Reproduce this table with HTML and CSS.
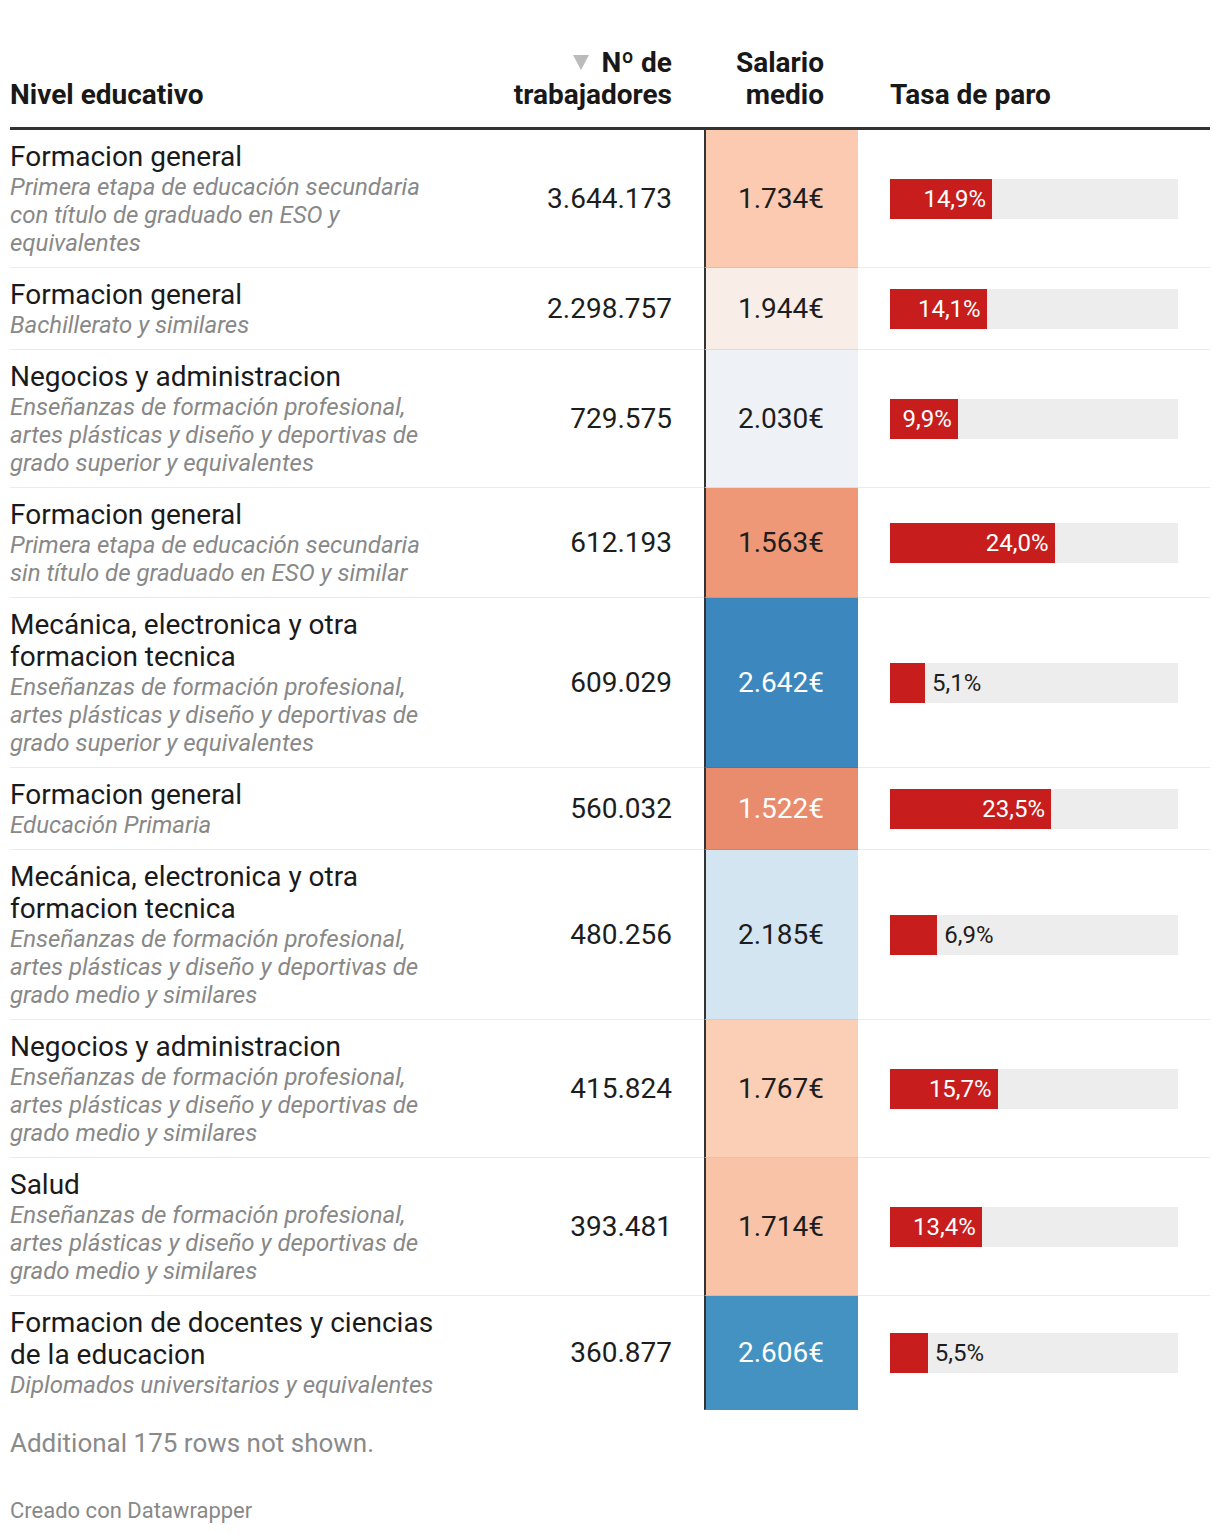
FILE: index.html
```html
<!DOCTYPE html>
<html lang="es">
<head>
<meta charset="utf-8">
<title>Nivel educativo</title>
<link rel="stylesheet" href="styles.css">
</head>
<body>
<div class="chart">
  <div class="row head">
    <div class="c name">Nivel educativo</div>
    <div class="c num"><span class="sort"></span> Nº de<br>trabajadores</div>
    <div class="c sal">Salario<br>medio</div>
    <div class="c tasa">Tasa de paro</div>
  </div>

  <div class="row">
    <div class="c name"><div class="t">Formacion general</div><div class="s">Primera etapa de educación secundaria con título de graduado en ESO y equivalentes</div></div>
    <div class="c num">3.644.173</div>
    <div class="c sal h1734">1.734€</div>
    <div class="c tasa"><div class="track"><div class="bar" style="--v:14.9"><span>14,9%</span></div></div></div>
  </div>

  <div class="row">
    <div class="c name"><div class="t">Formacion general</div><div class="s">Bachillerato y similares</div></div>
    <div class="c num">2.298.757</div>
    <div class="c sal h1944">1.944€</div>
    <div class="c tasa"><div class="track"><div class="bar" style="--v:14.1"><span>14,1%</span></div></div></div>
  </div>

  <div class="row">
    <div class="c name"><div class="t">Negocios y administracion</div><div class="s">Enseñanzas de formación profesional, artes plásticas y diseño y deportivas de grado superior y equivalentes</div></div>
    <div class="c num">729.575</div>
    <div class="c sal h2030">2.030€</div>
    <div class="c tasa"><div class="track"><div class="bar" style="--v:9.9"><span>9,9%</span></div></div></div>
  </div>

  <div class="row">
    <div class="c name"><div class="t">Formacion general</div><div class="s">Primera etapa de educación secundaria sin título de graduado en ESO y similar</div></div>
    <div class="c num">612.193</div>
    <div class="c sal h1563">1.563€</div>
    <div class="c tasa"><div class="track"><div class="bar" style="--v:24.0"><span>24,0%</span></div></div></div>
  </div>

  <div class="row">
    <div class="c name"><div class="t">Mecánica, electronica y otra formacion tecnica</div><div class="s">Enseñanzas de formación profesional, artes plásticas y diseño y deportivas de grado superior y equivalentes</div></div>
    <div class="c num">609.029</div>
    <div class="c sal h2642 light">2.642€</div>
    <div class="c tasa"><div class="track"><div class="bar out" style="--v:5.1"><span>5,1%</span></div></div></div>
  </div>

  <div class="row">
    <div class="c name"><div class="t">Formacion general</div><div class="s">Educación Primaria</div></div>
    <div class="c num">560.032</div>
    <div class="c sal h1522 light">1.522€</div>
    <div class="c tasa"><div class="track"><div class="bar" style="--v:23.5"><span>23,5%</span></div></div></div>
  </div>

  <div class="row">
    <div class="c name"><div class="t">Mecánica, electronica y otra formacion tecnica</div><div class="s">Enseñanzas de formación profesional, artes plásticas y diseño y deportivas de grado medio y similares</div></div>
    <div class="c num">480.256</div>
    <div class="c sal h2185">2.185€</div>
    <div class="c tasa"><div class="track"><div class="bar out" style="--v:6.9"><span>6,9%</span></div></div></div>
  </div>

  <div class="row">
    <div class="c name"><div class="t">Negocios y administracion</div><div class="s">Enseñanzas de formación profesional, artes plásticas y diseño y deportivas de grado medio y similares</div></div>
    <div class="c num">415.824</div>
    <div class="c sal h1767">1.767€</div>
    <div class="c tasa"><div class="track"><div class="bar" style="--v:15.7"><span>15,7%</span></div></div></div>
  </div>

  <div class="row">
    <div class="c name"><div class="t">Salud</div><div class="s">Enseñanzas de formación profesional, artes plásticas y diseño y deportivas de grado medio y similares</div></div>
    <div class="c num">393.481</div>
    <div class="c sal h1714">1.714€</div>
    <div class="c tasa"><div class="track"><div class="bar" style="--v:13.4"><span>13,4%</span></div></div></div>
  </div>

  <div class="row last">
    <div class="c name"><div class="t">Formacion de docentes y ciencias de la educacion</div><div class="s">Diplomados universitarios y equivalentes</div></div>
    <div class="c num">360.877</div>
    <div class="c sal h2606 light">2.606€</div>
    <div class="c tasa"><div class="track"><div class="bar out" style="--v:5.5"><span>5,5%</span></div></div></div>
  </div>

  <p class="more">Additional 175 rows not shown.</p>
  <p class="credit">Creado con Datawrapper</p>
</div>
</body>
</html>
```

FILE: styles.css
```css
* { box-sizing: border-box; }

html, body {
  margin: 0;
  padding: 0;
  background: #fff;
}

body {
  font-family: Roboto, "Liberation Sans", Arial, sans-serif;
  color: #1d1d1d;
}

.chart {
  padding: 47px 10px 0;
  width: 1220px;
}

.row {
  display: grid;
  grid-template-columns: 440px 254px 154px 1fr;
}

.c {
  border-bottom: 1px solid rgba(0, 0, 0, 0.075);
  display: flex;
  align-items: center;
}

.row.last .c { border-bottom-color: transparent; }

.head .c {
  border-bottom: 3px solid #333;
  font-weight: 700;
  font-size: 28px;
  line-height: 32px;
  color: #181818;
  padding-bottom: 16px;
  align-items: flex-end;
}

.name {
  flex-direction: column;
  align-items: flex-start !important;
  justify-content: flex-start;
  padding: 11px 0 10px;
}

.head .name { padding-top: 0; padding-bottom: 16px; justify-content: flex-end; }

.t {
  font-size: 28px;
  line-height: 32px;
  color: #1a1a1a;
}

.s {
  font-size: 24px;
  line-height: 28px;
  font-style: italic;
  color: #888;
}

.num {
  justify-content: flex-end;
  text-align: right;
  padding-right: 32px;
  font-size: 28px;
}

.sort {
  display: inline-block;
  width: 0;
  height: 0;
  border-left: 8px solid transparent;
  border-right: 8px solid transparent;
  border-top: 15px solid #bbb;
  margin-right: 6px;
  vertical-align: 2px;
}

.head .num { display: block; align-self: end; }

.sal {
  justify-content: flex-end;
  text-align: right;
  padding-right: 34px;
  font-size: 28px;
  border-left: 2px solid #333;
}

.head .sal {
  border-left: none;
  display: block;
  align-self: end;
}

.light { color: #fff; }

.h1734 { background: #fbcab1; }
.h1944 { background: #f8ede7; }
.h2030 { background: #eef2f6; }
.h1563 { background: #ee9877; }
.h2642 { background: #3b87be; }
.h1522 { background: #e98c6d; }
.h2185 { background: #d3e5f1; }
.h1767 { background: #fbcfb5; }
.h1714 { background: #f9c3a7; }
.h2606 { background: #4392c2; }

.tasa {
  padding-left: 32px;
}

.track {
  width: 288px;
  height: 40px;
  background: #ededed;
  display: flex;
}

.bar {
  width: calc(var(--v) * 6.857px);
  height: 100%;
  background: #c71e1d;
  position: relative;
  display: flex;
  align-items: center;
  justify-content: flex-end;
  padding-right: 6px;
  font-size: 24px;
  color: #fff;
}

.bar.out span {
  position: absolute;
  left: 100%;
  margin-left: 7px;
  color: #1d1d1d;
}

.more {
  margin: 17px 0 0;
  font-size: 26px;
  line-height: 32px;
  color: #8a8a8a;
}

.credit {
  margin: 39px 0 0;
  font-size: 22px;
  line-height: 26px;
  color: #888;
}
```
